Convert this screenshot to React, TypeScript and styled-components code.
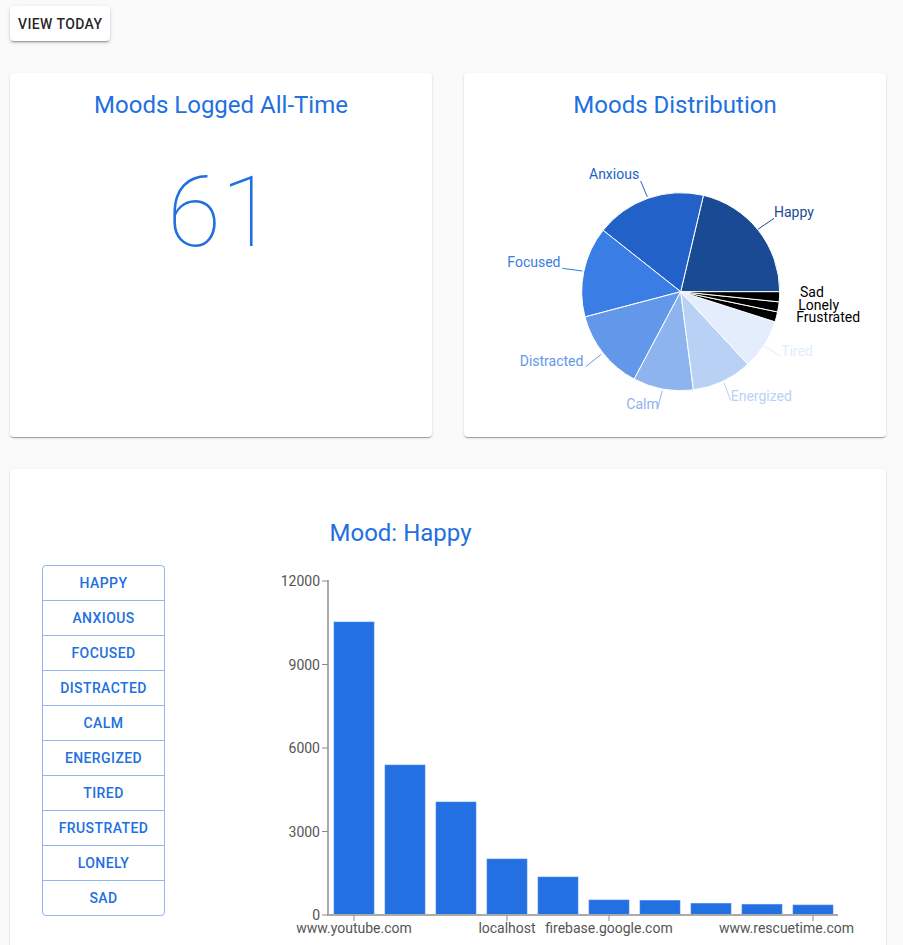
import React from "react";
import styled, { createGlobalStyle } from "styled-components";

const BLUE = "#2270e0";

const GlobalStyle = createGlobalStyle`
  html, body { margin: 0; padding: 0; background: #fafafa; }
  body { font-family: Roboto, "Liberation Sans", sans-serif; }
  * { box-sizing: border-box; }
`;

const Page = styled.div`
  padding: 6px 17px 0 10px;
`;

const TopButton = styled.button`
  height: 35px;
  padding: 0 8px;
  border: none;
  border-radius: 4px;
  background: #fff;
  color: rgba(0, 0, 0, 0.87);
  font-family: Roboto, sans-serif;
  font-weight: 500;
  font-size: 14px;
  letter-spacing: 0.4px;
  text-transform: uppercase;
  box-shadow: 0px 3px 1px -2px rgba(0, 0, 0, 0.2), 0px 2px 2px 0px rgba(0, 0, 0, 0.14),
    0px 1px 5px 0px rgba(0, 0, 0, 0.12);
  cursor: pointer;
`;

const Grid = styled.div`
  display: grid;
  grid-template-columns: 422px 422px;
  column-gap: 32px;
  row-gap: 32px;
  margin-top: 32px;
`;

const Card = styled.div<{ $full?: boolean }>`
  background: #fff;
  border-radius: 4px;
  box-shadow: 0px 2px 1px -1px rgba(0, 0, 0, 0.2), 0px 1px 1px 0px rgba(0, 0, 0, 0.14),
    0px 1px 3px 0px rgba(0, 0, 0, 0.12);
  ${(p) => (p.$full ? "grid-column: 1 / -1;" : "")}
`;

const StatCard = styled(Card)`
  height: 364px;
  padding-top: 16px;
  display: flex;
  flex-direction: column;
  align-items: center;
`;

const CardTitle = styled.h2`
  margin: 0;
  font-weight: 400;
  font-size: 24px;
  line-height: 32px;
  color: ${BLUE};
  text-align: center;
`;

const BigNumber = styled.div`
  margin-top: 43px;
  font-size: 98px;
  line-height: 98px;
  font-weight: 100;
  color: ${BLUE};
`;

const PieSvg = styled.svg`
  display: block;
  flex-shrink: 0;
  font-family: Roboto, sans-serif;
`;

const BottomCard = styled(Card)`
  padding: 48px 32px 40px;
`;

const ChartTitle = styled(CardTitle)`
  width: 717px;
`;

const ChartRow = styled.div`
  display: flex;
  align-items: flex-start;
  margin-top: 16px;
`;

const ButtonGroup = styled.div`
  width: 123px;
  flex-shrink: 0;
  display: flex;
  flex-direction: column;
  border: 1px solid rgba(34, 112, 224, 0.5);
  border-radius: 4px;
`;

const MoodButton = styled.button`
  height: 35px;
  border: none;
  border-bottom: 1px solid rgba(34, 112, 224, 0.5);
  background: transparent;
  color: ${BLUE};
  font-family: Roboto, sans-serif;
  font-weight: 500;
  font-size: 14px;
  letter-spacing: 0.4px;
  text-transform: uppercase;
  cursor: pointer;
  &:last-child {
    border-bottom: none;
    height: 34px;
  }
`;

const BarSvg = styled.svg`
  display: block;
  flex-shrink: 0;
  margin-left: 105px;
  font-family: Roboto, sans-serif;
`;

type Slice = { name: string; count: number; color: string };

const slices: Slice[] = [
  { name: "Happy", count: 13, color: "#1b4a94" },
  { name: "Anxious", count: 11, color: "#2262c8" },
  { name: "Focused", count: 9, color: "#3a7de4" },
  { name: "Distracted", count: 8, color: "#6297ea" },
  { name: "Calm", count: 6, color: "#8db4ef" },
  { name: "Energized", count: 6, color: "#b9d1f5" },
  { name: "Tired", count: 5, color: "#e3edfc" },
  { name: "Frustrated", count: 1, color: "#000" },
  { name: "Lonely", count: 1, color: "#000" },
  { name: "Sad", count: 1, color: "#000" },
];

// offsets of pie svg within page: (464, 121)
const OX = 464;
const OY = 121;
const CX = 680.7 - OX;
const CY = 291.7 - OY;
const R = 99;

type Label = {
  text: string;
  x: number;
  y: number;
  color: string;
  line?: [number, number, number, number];
};

const pieLabels: Label[] = [
  { text: "Anxious", x: 589, y: 179, color: "#2262c8", line: [647.3, 196.7, 640.7, 181] },
  { text: "Happy", x: 774, y: 217.3, color: "#1b4a94", line: [758, 229.3, 774, 218.3] },
  { text: "Focused", x: 507.3, y: 266.7, color: "#3a7de4", line: [562.3, 268.3, 582.3, 271] },
  { text: "Distracted", x: 519.7, y: 365.7, color: "#6297ea", line: [585.7, 366.7, 601.3, 354.3] },
  { text: "Calm", x: 626.3, y: 409.3, color: "#8db4ef", line: [657.3, 409.3, 662.3, 390.7] },
  { text: "Energized", x: 730.7, y: 401, color: "#b9d1f5", line: [730.7, 400.7, 724, 382.7] },
  { text: "Tired", x: 781.3, y: 355.7, color: "#e3edfc", line: [780.7, 356, 764, 346] },
  { text: "Sad", x: 800, y: 297.3, color: "#000" },
  { text: "Lonely", x: 798.3, y: 310, color: "#000" },
  { text: "Frustrated", x: 796.3, y: 322.3, color: "#000" },
];

function pt(a: number): [number, number] {
  const rad = (a * Math.PI) / 180;
  return [CX + R * Math.cos(rad), CY - R * Math.sin(rad)];
}

function PieChart() {
  const total = slices.reduce((s, x) => s + x.count, 0);
  let cum = 0;
  const paths = slices.map((s) => {
    const a0 = cum;
    const deg = (s.count / total) * 360;
    cum += deg;
    const a1 = cum;
    const [x0, y0] = pt(a0);
    const [x1, y1] = pt(a1);
    const large = deg > 180 ? 1 : 0;
    const d = `M ${CX} ${CY} L ${x0} ${y0} A ${R} ${R} 0 ${large} 0 ${x1} ${y1} Z`;
    return <path key={s.name} d={d} fill={s.color} stroke="#fff" strokeWidth={1} />;
  });
  return (
    <PieSvg width={422} height={316} viewBox="0 0 422 316">
      {paths}
      {pieLabels.map((l) => (
        <g key={l.text}>
          {l.line && (
            <line
              x1={l.line[0] - OX}
              y1={l.line[1] - OY}
              x2={l.line[2] - OX}
              y2={l.line[3] - OY}
              stroke={l.color}
              strokeWidth={1}
            />
          )}
          <text x={l.x - OX} y={l.y - OY} fill={l.color} fontSize={14}>
            {l.text}
          </text>
        </g>
      ))}
    </PieSvg>
  );
}

const moods = [
  "Happy",
  "Anxious",
  "Focused",
  "Distracted",
  "Calm",
  "Energized",
  "Tired",
  "Frustrated",
  "Lonely",
  "Sad",
];

const values = [10527, 5389, 4060, 2012, 1365, 539, 528, 420, 384, 359];

const AXIS_X = 58;
const BASE_Y = 350;
const TOP_Y = 16;
const MAXV = 12000;

function BarChart() {
  const h = (v: number) => ((BASE_Y - TOP_Y) * v) / MAXV;
  const ticks = [0, 3000, 6000, 9000, 12000];
  const xLabels: { i: number; text: string; anchor: "middle" | "end"; x?: number }[] = [
    { i: 0, text: "www.youtube.com", anchor: "middle" },
    { i: 3, text: "localhost", anchor: "middle" },
    { i: 5, text: "firebase.google.com", anchor: "middle" },
    { i: 9, text: "www.rescuetime.com", anchor: "end", x: 584 },
  ];
  return (
    <BarSvg width={600} height={385} viewBox="0 0 600 385">
      {values.map((v, i) => {
        const x = 64 + i * 51;
        const bh = h(v);
        return (
          <rect
            key={i}
            x={x}
            y={BASE_Y - bh}
            width={40}
            height={bh}
            fill="#2370e2"
            stroke="#4a8cee"
            strokeWidth={0.6}
          />
        );
      })}
      <line x1={AXIS_X} y1={TOP_Y - 1} x2={AXIS_X} y2={BASE_Y + 1} stroke="#aaa" strokeWidth={2} />
      <line x1={AXIS_X - 1} y1={BASE_Y} x2={568} y2={BASE_Y} stroke="#aaa" strokeWidth={2} />
      {ticks.map((t) => {
        const y = BASE_Y - h(t);
        return (
          <g key={t}>
            <line x1={AXIS_X - 6} y1={y} x2={AXIS_X} y2={y} stroke="#888" strokeWidth={1} />
            <text x={AXIS_X - 8} y={y + 5} textAnchor="end" fontSize={14} fill="#555">
              {t}
            </text>
          </g>
        );
      })}
      {xLabels.map((l) => {
        const cx = 64 + l.i * 51 + 20;
        return (
          <g key={l.text}>
            <line x1={cx} y1={BASE_Y} x2={cx} y2={BASE_Y + 6} stroke="#888" strokeWidth={1} />
            <text
              x={l.x ?? cx}
              y={368}
              textAnchor={l.anchor}
              fontSize={14}
              fill="#555"
            >
              {l.text}
            </text>
          </g>
        );
      })}
    </BarSvg>
  );
}

export default function App() {
  return (
    <>
      <GlobalStyle />
      <Page>
        <TopButton>View Today</TopButton>
        <Grid>
          <StatCard>
            <CardTitle>Moods Logged All-Time</CardTitle>
            <BigNumber>61</BigNumber>
          </StatCard>
          <StatCard>
            <CardTitle>Moods Distribution</CardTitle>
            <PieChart />
          </StatCard>
          <BottomCard $full>
            <ChartTitle>Mood: Happy</ChartTitle>
            <ChartRow>
              <ButtonGroup>
                {moods.map((m) => (
                  <MoodButton key={m}>{m}</MoodButton>
                ))}
              </ButtonGroup>
              <BarChart />
            </ChartRow>
          </BottomCard>
        </Grid>
      </Page>
    </>
  );
}
